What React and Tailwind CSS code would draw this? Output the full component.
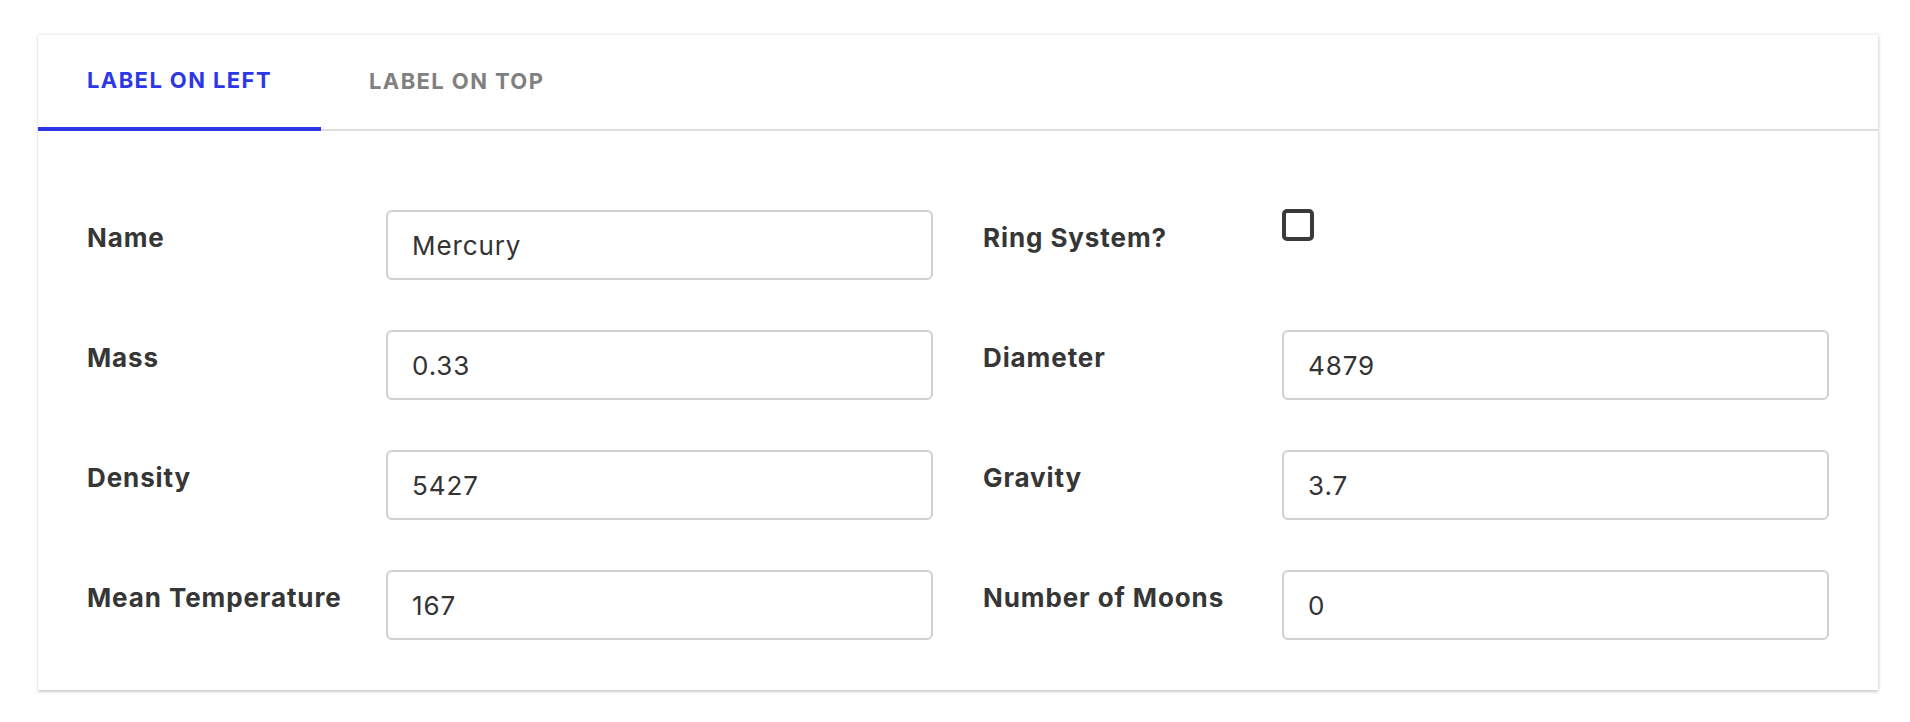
import React, { useState } from 'react';

const fields = [
  { label: 'Name', value: 'Mercury' },
  { label: 'Ring System?', type: 'checkbox' },
  { label: 'Mass', value: '0.33' },
  { label: 'Diameter', value: '4879' },
  { label: 'Density', value: '5427' },
  { label: 'Gravity', value: '3.7' },
  { label: 'Mean Temperature', value: '167' },
  { label: 'Number of Moons', value: '0' },
];

const tabs = ['LABEL ON LEFT', 'LABEL ON TOP'];

const Field = ({ field }) => (
  <div className="flex items-start">
    <label className="w-[299px] shrink-0 pt-[10px] text-[26px] leading-[36px] font-bold tracking-[0.9px] text-[#363636]">
      {field.label}
    </label>
    {field.type === 'checkbox' ? (
      <div className="w-[32px] h-[32px] -mt-[1px] border-4 border-[#3a3a3a] rounded-[5px] bg-white" />
    ) : (
      <input
        type="text"
        defaultValue={field.value}
        className="w-[547px] h-[70px] border-2 border-[#d0d0d0] rounded-[6px] pl-[24px] text-[26px] tracking-[0.9px] text-[#333] outline-none"
      />
    )}
  </div>
);

export default function App() {
  const [active, setActive] = useState(0);

  return (
    <div className="min-h-screen bg-white pt-[34px] pl-[38px] font-['Inter',sans-serif]">
      <div className="w-[1840px] bg-white border-t border-[#f0f0f0] shadow-[0_2px_3px_rgba(0,0,0,0.18),1px_0_3px_rgba(0,0,0,0.08)]">
        {/* tabs */}
        <div className="flex border-b-2 border-[#dedede] h-[96px]">
          {tabs.map((t, i) => (
            <button
              key={t}
              onClick={() => setActive(i)}
              className={
                i === active
                  ? 'px-[49px] pb-[2px] -mb-[2px] border-b-4 border-[#2e37e8] text-[#2e37e8] text-[22px] font-bold tracking-[1.4px]'
                  : 'px-[48px] pb-[2px] text-[#808080] text-[22px] font-bold tracking-[1.4px]'
              }
            >
              {t}
            </button>
          ))}
        </div>

        {/* form */}
        <div className="grid grid-cols-2 gap-x-[50px] gap-y-[50px] pt-[79px] pb-[50px] px-[49px]">
          {fields.map((f) => (
            <Field key={f.label} field={f} />
          ))}
        </div>
      </div>
    </div>
  );
}
